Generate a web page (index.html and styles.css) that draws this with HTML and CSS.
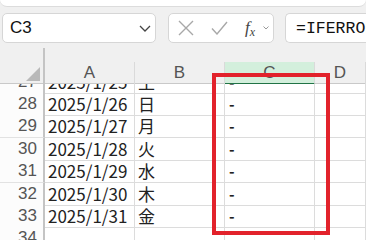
FILE: index.html
```html
<!DOCTYPE html>
<html lang="ja">
<head>
  <meta charset="UTF-8">
  <title>Sheet</title>
  <link rel="stylesheet" href="styles.css">
</head>
<body>
  <div class="app">
    <div class="ribbon-edge"></div>

    <div class="formula-bar">
      <div class="name-box">
        <span>C3</span>
        <svg class="chevron" width="12" height="7" viewBox="0 0 12 7"><path d="M1 1l5 5 5-5" fill="none" stroke="#444" stroke-width="1.3"/></svg>
      </div>
      <div class="fx-tools">
        <svg width="16" height="16" viewBox="0 0 16 16"><path d="M1 1l14 14M15 1L1 15" stroke="#a8a8a8" stroke-width="1.4"/></svg>
        <svg width="17" height="14" viewBox="0 0 17 14"><path d="M1 7.5l5 5.5L16 1" fill="none" stroke="#a8a8a8" stroke-width="1.4"/></svg>
        <span class="fx">f<sub>x</sub></span>
        <svg class="mini-chevron" width="6" height="4" viewBox="0 0 6 4"><path d="M0.5 0.5l2.5 2.5 2.5-2.5" fill="none" stroke="#999" stroke-width="1"/></svg>
      </div>
      <div class="formula-input">=IFERROR(TEXT(A3,"aaa"),"-")</div>
    </div>

    <div class="sheet">
      <div class="col-headers">
        <div class="corner"><span class="corner-tri"></span></div>
        <div class="col-head">A</div>
        <div class="col-head">B</div>
        <div class="col-head active">C</div>
        <div class="col-head">D</div>
      </div>

      <div class="rows">
        <div class="row"><div class="rh">27</div><div class="cell">2025/1/25</div><div class="cell">土</div><div class="cell dash">-</div><div class="cell"></div></div>
        <div class="row"><div class="rh">28</div><div class="cell">2025/1/26</div><div class="cell">日</div><div class="cell dash">-</div><div class="cell"></div></div>
        <div class="row"><div class="rh">29</div><div class="cell">2025/1/27</div><div class="cell">月</div><div class="cell dash">-</div><div class="cell"></div></div>
        <div class="row"><div class="rh">30</div><div class="cell">2025/1/28</div><div class="cell">火</div><div class="cell dash">-</div><div class="cell"></div></div>
        <div class="row"><div class="rh">31</div><div class="cell">2025/1/29</div><div class="cell">水</div><div class="cell dash">-</div><div class="cell"></div></div>
        <div class="row"><div class="rh">32</div><div class="cell">2025/1/30</div><div class="cell">木</div><div class="cell dash">-</div><div class="cell"></div></div>
        <div class="row"><div class="rh">33</div><div class="cell">2025/1/31</div><div class="cell">金</div><div class="cell dash">-</div><div class="cell"></div></div>
        <div class="row"><div class="rh">34</div><div class="cell"></div><div class="cell"></div><div class="cell"></div><div class="cell"></div></div>
      </div>

      <div class="highlight-box"></div>
    </div>
  </div>
</body>
</html>
```

FILE: styles.css
```css
* {
  margin: 0;
  padding: 0;
  box-sizing: border-box;
}

body {
  width: 366px;
  height: 240px;
  overflow: hidden;
  background: #f0f0f0;
  font-family: "Noto Sans CJK JP", "Noto Sans", sans-serif;
  color: #222;
}

.app {
  height: 240px;
  display: flex;
  flex-direction: column;
}

.ribbon-edge {
  height: 7px;
  background: #fff;
  border-bottom: 1px solid #dcdcdc;
  border-radius: 0 0 8px 8px;
}

.formula-bar {
  display: flex;
  gap: 11px;
  height: 30px;
  margin-top: 6px;
  padding-left: 2px;
}

.name-box,
.fx-tools,
.formula-input {
  background: #fff;
  border: 1px solid #d6d6d6;
  border-radius: 5px;
  display: flex;
  align-items: center;
}

.name-box {
  width: 154px;
  padding: 0 4px 0 7px;
  justify-content: space-between;
  font-family: "Liberation Sans", sans-serif;
  font-size: 17px;
  color: #111;
}

.fx-tools {
  width: 106px;
  margin-left: 1px;
  padding-left: 9px;
  gap: 17px;
}

.fx {
  font-family: "Liberation Serif", serif;
  font-style: italic;
  font-size: 17px;
  color: #444;
  line-height: 1;
}

.fx sub {
  font-size: 12px;
  vertical-align: -3px;
}

.mini-chevron {
  margin-left: -9px;
}

.formula-input {
  flex: 1;
  border-right: none;
  border-radius: 5px 0 0 5px;
  padding-left: 10px;
  font-family: "Liberation Mono", monospace;
  font-size: 16.5px;
  color: #111;
  white-space: nowrap;
  overflow: hidden;
}

.sheet {
  position: relative;
  flex: 1;
  margin-top: 5px;
  display: flex;
  flex-direction: column;
  overflow: hidden;
}

.col-headers,
.row {
  display: grid;
  grid-template-columns: 45px 90px 90px 90px 1fr;
}

.col-headers {
  height: 36px;
  align-items: end;
  border-bottom: 1px solid #c9c9c9;
}

.corner {
  height: 36px;
  border-right: 2px solid #c4c4c4;
  position: relative;
}

.corner-tri {
  position: absolute;
  right: 3px;
  bottom: 3px;
  width: 0;
  height: 0;
  border-left: 14px solid transparent;
  border-bottom: 14px solid #b9b9b9;
}

.col-head {
  height: 22px;
  border-right: 1px solid #dadada;
  text-align: center;
  font-family: "Liberation Sans", sans-serif;
  font-size: 17px;
  line-height: 22px;
  color: #555;
}

.col-head.active {
  background: #d3efdc;
  border-bottom: 2px solid #217346;
  margin-bottom: -1px;
  height: 23px;
}

.rows {
  flex: 1;
  background: #fff;
  overflow: hidden;
}

.row {
  height: 22.4px;
}

.row:first-child {
  margin-top: -13.4px;
}

.rh {
  background: #fcfcfc;
  border-right: 2px solid #c4c4c4;
  border-bottom: 1px solid #e2e2e2;
  text-align: right;
  padding-right: 6px;
  font-family: "Liberation Sans", sans-serif;
  font-size: 17px;
  line-height: 22px;
  color: #555;
}

.cell {
  border-right: 1px solid #dcdcdc;
  border-bottom: 1px solid #dcdcdc;
  padding-left: 3px;
  font-size: 17px;
  line-height: 21px;
  white-space: nowrap;
  overflow: hidden;
}

.cell.dash {
  font-size: 15px;
  font-weight: 700;
  padding-left: 4px;
}

.highlight-box {
  position: absolute;
  left: 212px;
  top: 25px;
  width: 118px;
  height: 162px;
  border: 4.5px solid #e2222b;
}
```
